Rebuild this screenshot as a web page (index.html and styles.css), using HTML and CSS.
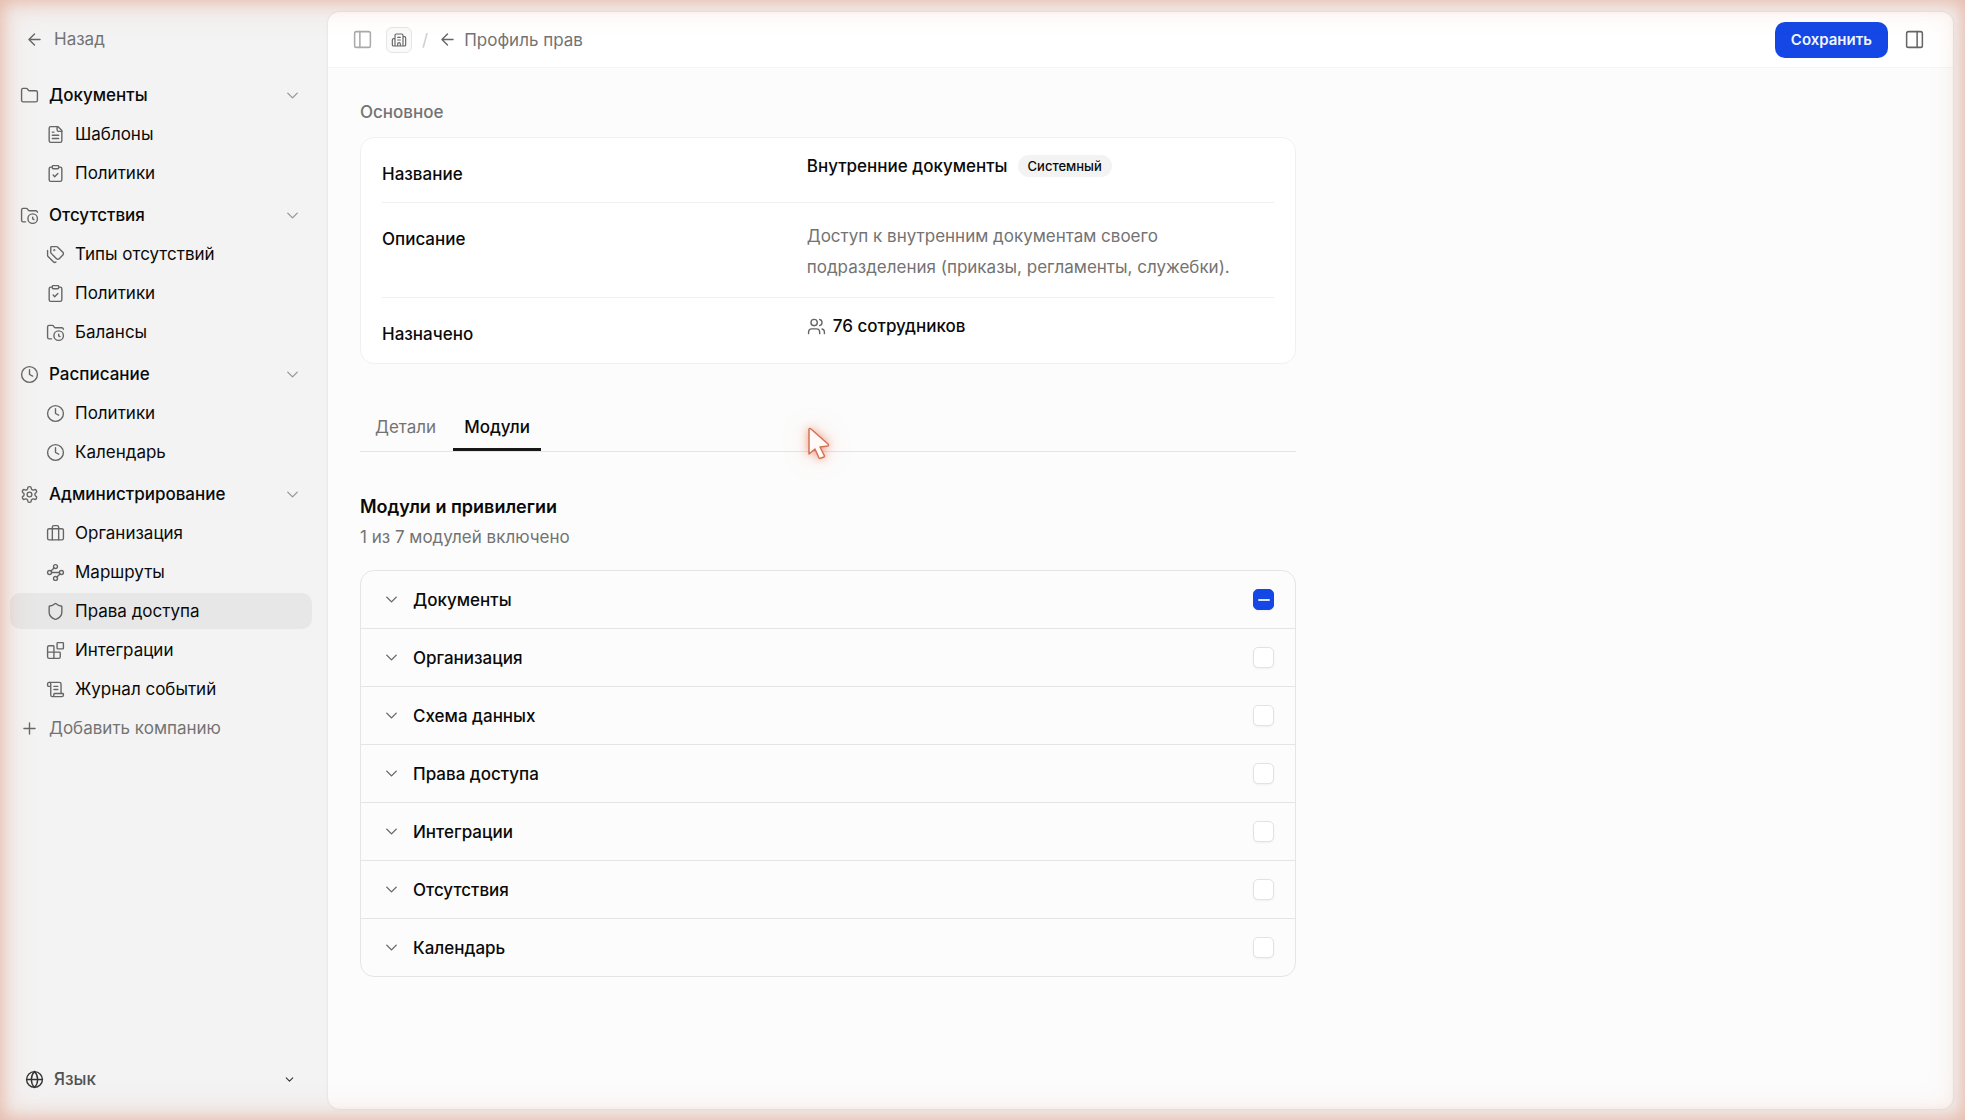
FILE: index.html
```html
<!DOCTYPE html>
<html lang="ru">
<head>
    <meta charset="UTF-8">
    <meta name="viewport" content="width=device-width, initial-scale=1.0">
    <title>Профиль прав</title>
    <link rel="stylesheet" href="styles.css">
</head>
<body>

<svg class="sprite" aria-hidden="true">
    <symbol id="arrow-left" viewBox="0 0 24 24"><path d="m12 19-7-7 7-7M19 12H5"/></symbol>
    <symbol id="chevron" viewBox="0 0 24 24"><path d="m6 9 6 6 6-6"/></symbol>
    <symbol id="plus" viewBox="0 0 24 24"><path d="M5 12h14M12 5v14"/></symbol>
    <symbol id="folder" viewBox="0 0 24 24"><path d="M20 20a2 2 0 0 0 2-2V8a2 2 0 0 0-2-2h-7.9a2 2 0 0 1-1.69-.9L9.6 3.9A2 2 0 0 0 7.93 3H4a2 2 0 0 0-2 2v13a2 2 0 0 0 2 2Z"/></symbol>
    <symbol id="file" viewBox="0 0 24 24"><path d="M15 2H6a2 2 0 0 0-2 2v16a2 2 0 0 0 2 2h12a2 2 0 0 0 2-2V7Z"/><path d="M14 2v4a2 2 0 0 0 2 2h4M10 9H8M16 13H8M16 17H8"/></symbol>
    <symbol id="clipboard" viewBox="0 0 24 24"><rect x="8" y="2" width="8" height="4" rx="1"/><path d="M16 4h2a2 2 0 0 1 2 2v14a2 2 0 0 1-2 2H6a2 2 0 0 1-2-2V6a2 2 0 0 1 2-2h2M9 14l2 2 4-4"/></symbol>
    <symbol id="folder-clock" viewBox="0 0 24 24"><path d="M16 14v2.2l1.6 1M7 20H4a2 2 0 0 1-2-2V5a2 2 0 0 1 2-2h3.9a2 2 0 0 1 1.69.9l.81 1.2a2 2 0 0 0 1.67.9H20a2 2 0 0 1 2 2"/><circle cx="16" cy="16" r="6"/></symbol>
    <symbol id="tags" viewBox="0 0 24 24"><path d="M13.172 2a2 2 0 0 1 1.414.586l6.71 6.71a2.4 2.4 0 0 1 0 3.408l-4.592 4.592a2.4 2.4 0 0 1-3.408 0l-6.71-6.71A2 2 0 0 1 6 9.172V3a1 1 0 0 1 1-1z"/><path d="M2 7v6.172a2 2 0 0 0 .586 1.414l6.71 6.71a2.4 2.4 0 0 0 3.191.193"/><circle cx="10.5" cy="6.5" r=".5"/></symbol>
    <symbol id="clock" viewBox="0 0 24 24"><circle cx="12" cy="12" r="10"/><path d="M12 6v6l4 2"/></symbol>
    <symbol id="settings" viewBox="0 0 24 24"><path d="M12.22 2h-.44a2 2 0 0 0-2 2v.18a2 2 0 0 1-1 1.73l-.43.25a2 2 0 0 1-2 0l-.15-.08a2 2 0 0 0-2.73.73l-.22.38a2 2 0 0 0 .73 2.73l.15.1a2 2 0 0 1 1 1.72v.51a2 2 0 0 1-1 1.74l-.15.09a2 2 0 0 0-.73 2.73l.22.38a2 2 0 0 0 2.73.73l.15-.08a2 2 0 0 1 2 0l.43.25a2 2 0 0 1 1 1.73V20a2 2 0 0 0 2 2h.44a2 2 0 0 0 2-2v-.18a2 2 0 0 1 1-1.73l.43-.25a2 2 0 0 1 2 0l.15.08a2 2 0 0 0 2.73-.73l.22-.39a2 2 0 0 0-.73-2.73l-.15-.08a2 2 0 0 1-1-1.74v-.5a2 2 0 0 1 1-1.74l.15-.09a2 2 0 0 0 .73-2.73l-.22-.38a2 2 0 0 0-2.73-.73l-.15.08a2 2 0 0 1-2 0l-.43-.25a2 2 0 0 1-1-1.73V4a2 2 0 0 0-2-2z"/><circle cx="12" cy="12" r="3"/></symbol>
    <symbol id="briefcase" viewBox="0 0 24 24"><rect x="2" y="6" width="20" height="14" rx="2"/><path d="M16 20V4a2 2 0 0 0-2-2h-4a2 2 0 0 0-2 2v16"/></symbol>
    <symbol id="waypoints" viewBox="0 0 24 24"><circle cx="12" cy="4.5" r="2.5"/><path d="m10.2 6.3-3.9 3.9M7 12h10M13.8 17.7l3.9-3.9"/><circle cx="4.5" cy="12" r="2.5"/><circle cx="19.5" cy="12" r="2.5"/><circle cx="12" cy="19.5" r="2.5"/></symbol>
    <symbol id="shield" viewBox="0 0 24 24"><path d="M20 13c0 5-3.5 7.5-7.66 8.95a1 1 0 0 1-.67-.01C7.5 20.5 4 18 4 13V6a1 1 0 0 1 1-1c2 0 4.5-1.2 6.24-2.72a1.17 1.17 0 0 1 1.52 0C14.51 3.81 17 5 19 5a1 1 0 0 1 1 1z"/></symbol>
    <symbol id="blocks" viewBox="0 0 24 24"><rect x="14" y="2" width="8" height="8" rx="1"/><path d="M10 22V7a1 1 0 0 0-1-1H4a2 2 0 0 0-2 2v12a2 2 0 0 0 2 2h12a2 2 0 0 0 2-2v-5a1 1 0 0 0-1-1H2"/></symbol>
    <symbol id="scroll" viewBox="0 0 24 24"><path d="M15 12h-5M15 8h-5M19 17V5a2 2 0 0 0-2-2H4"/><path d="M8 21h12a2 2 0 0 0 2-2v-1a1 1 0 0 0-1-1H11a1 1 0 0 0-1 1v1a2 2 0 1 1-4 0V5a2 2 0 1 0-4 0v2a1 1 0 0 0 1 1h3"/></symbol>
    <symbol id="globe" viewBox="0 0 24 24"><circle cx="12" cy="12" r="10"/><path d="M12 2a14.5 14.5 0 0 0 0 20 14.5 14.5 0 0 0 0-20M2 12h20"/></symbol>
    <symbol id="panel-left" viewBox="0 0 24 24"><rect x="3" y="3" width="18" height="18" rx="2"/><path d="M9 3v18"/></symbol>
    <symbol id="panel-right" viewBox="0 0 24 24"><rect x="3" y="3" width="18" height="18" rx="2"/><path d="M15 3v18"/></symbol>
    <symbol id="building" viewBox="0 0 24 24"><path d="M10 12h4M10 8h4M14 21v-3a2 2 0 0 0-4 0v3M6 10H4a2 2 0 0 0-2 2v7a2 2 0 0 0 2 2h16a2 2 0 0 0 2-2V9a2 2 0 0 0-2-2h-2M6 21V5a2 2 0 0 1 2-2h8a2 2 0 0 1 2 2v16"/></symbol>
    <symbol id="users" viewBox="0 0 24 24"><path d="M16 21v-2a4 4 0 0 0-4-4H6a4 4 0 0 0-4 4v2"/><circle cx="9" cy="7" r="4"/><path d="M22 21v-2a4 4 0 0 0-3-3.87M16 3.13a4 4 0 0 1 0 7.75"/></symbol>
</svg>

<div class="app">
    <aside class="sidebar">
        <a class="side-link back" href="#"><svg class="icon"><use href="#arrow-left"/></svg>Назад</a>

        <nav class="nav">
            <div class="nav-group">
                <button class="side-link group-title" type="button" aria-expanded="true"><svg class="icon"><use href="#folder"/></svg>Документы<svg class="icon caret"><use href="#chevron"/></svg></button>
                <a class="side-link sub" href="#"><svg class="icon"><use href="#file"/></svg>Шаблоны</a>
                <a class="side-link sub" href="#"><svg class="icon"><use href="#clipboard"/></svg>Политики</a>
            </div>
            <div class="nav-group">
                <button class="side-link group-title" type="button" aria-expanded="true"><svg class="icon"><use href="#folder-clock"/></svg>Отсутствия<svg class="icon caret"><use href="#chevron"/></svg></button>
                <a class="side-link sub" href="#"><svg class="icon"><use href="#tags"/></svg>Типы отсутствий</a>
                <a class="side-link sub" href="#"><svg class="icon"><use href="#clipboard"/></svg>Политики</a>
                <a class="side-link sub" href="#"><svg class="icon"><use href="#folder-clock"/></svg>Балансы</a>
            </div>
            <div class="nav-group">
                <button class="side-link group-title" type="button" aria-expanded="true"><svg class="icon"><use href="#clock"/></svg>Расписание<svg class="icon caret"><use href="#chevron"/></svg></button>
                <a class="side-link sub" href="#"><svg class="icon"><use href="#clock"/></svg>Политики</a>
                <a class="side-link sub" href="#"><svg class="icon"><use href="#clock"/></svg>Календарь</a>
            </div>
            <div class="nav-group">
                <button class="side-link group-title" type="button" aria-expanded="true"><svg class="icon"><use href="#settings"/></svg>Администрирование<svg class="icon caret"><use href="#chevron"/></svg></button>
                <a class="side-link sub" href="#"><svg class="icon"><use href="#briefcase"/></svg>Организация</a>
                <a class="side-link sub" href="#"><svg class="icon"><use href="#waypoints"/></svg>Маршруты</a>
                <a class="side-link sub active" href="#" aria-current="page"><svg class="icon"><use href="#shield"/></svg>Права доступа</a>
                <a class="side-link sub" href="#"><svg class="icon"><use href="#blocks"/></svg>Интеграции</a>
                <a class="side-link sub" href="#"><svg class="icon"><use href="#scroll"/></svg>Журнал событий</a>
                <button class="side-link add" type="button"><svg class="icon"><use href="#plus"/></svg>Добавить компанию</button>
            </div>
        </nav>

        <button class="side-link language" type="button" aria-haspopup="menu"><svg class="icon"><use href="#globe"/></svg>Язык<svg class="icon small-caret"><use href="#chevron"/></svg></button>
    </aside>

    <main class="page">
        <header class="topbar">
            <button class="icon-button faded" type="button" aria-label="Боковая панель"><svg class="icon panel"><use href="#panel-left"/></svg></button>
            <a class="home" href="#" aria-label="Компания"><svg class="icon"><use href="#building"/></svg></a>
            <span class="slash">/</span>
            <a class="crumb" href="#"><svg class="icon"><use href="#arrow-left"/></svg>Профиль прав</a>
            <button class="save" type="button">Сохранить</button>
            <button class="icon-button" type="button" aria-label="Правая панель"><svg class="icon panel"><use href="#panel-right"/></svg></button>
        </header>

        <div class="content">
            <h2 class="section-label">Основное</h2>
            <dl class="info">
                <div class="info-row">
                    <dt>Название</dt>
                    <dd>Внутренние документы<span class="badge">Системный</span></dd>
                </div>
                <div class="info-row">
                    <dt>Описание</dt>
                    <dd class="description">Доступ к внутренним документам своего подразделения (приказы, регламенты, служебки).</dd>
                </div>
                <div class="info-row">
                    <dt>Назначено</dt>
                    <dd><svg class="icon users"><use href="#users"/></svg>76 сотрудников</dd>
                </div>
            </dl>

            <div class="tabs" role="tablist">
                <button class="tab" type="button" role="tab" aria-selected="false">Детали</button>
                <button class="tab selected" type="button" role="tab" aria-selected="true">Модули</button>
            </div>

            <h2 class="modules-title">Модули и привилегии</h2>
            <p class="modules-count">1 из 7 модулей включено</p>

            <ul class="modules">
                <li class="module">
                    <button class="toggle" type="button" aria-label="Развернуть Документы"><svg class="icon"><use href="#chevron"/></svg></button>
                    <label for="m-docs">Документы</label>
                    <input class="check partial" type="checkbox" id="m-docs">
                </li>
                <li class="module">
                    <button class="toggle" type="button" aria-label="Развернуть Организация"><svg class="icon"><use href="#chevron"/></svg></button>
                    <label for="m-org">Организация</label>
                    <input class="check" type="checkbox" id="m-org">
                </li>
                <li class="module">
                    <button class="toggle" type="button" aria-label="Развернуть Схема данных"><svg class="icon"><use href="#chevron"/></svg></button>
                    <label for="m-schema">Схема данных</label>
                    <input class="check" type="checkbox" id="m-schema">
                </li>
                <li class="module">
                    <button class="toggle" type="button" aria-label="Развернуть Права доступа"><svg class="icon"><use href="#chevron"/></svg></button>
                    <label for="m-access">Права доступа</label>
                    <input class="check" type="checkbox" id="m-access">
                </li>
                <li class="module">
                    <button class="toggle" type="button" aria-label="Развернуть Интеграции"><svg class="icon"><use href="#chevron"/></svg></button>
                    <label for="m-integrations">Интеграции</label>
                    <input class="check" type="checkbox" id="m-integrations">
                </li>
                <li class="module">
                    <button class="toggle" type="button" aria-label="Развернуть Отсутствия"><svg class="icon"><use href="#chevron"/></svg></button>
                    <label for="m-absence">Отсутствия</label>
                    <input class="check" type="checkbox" id="m-absence">
                </li>
                <li class="module">
                    <button class="toggle" type="button" aria-label="Развернуть Календарь"><svg class="icon"><use href="#chevron"/></svg></button>
                    <label for="m-calendar">Календарь</label>
                    <input class="check" type="checkbox" id="m-calendar">
                </li>
            </ul>
        </div>
    </main>
</div>

<div class="glow"></div>
<svg class="pointer" viewBox="0 0 24 34" aria-hidden="true"><path d="M2 2v25l6-5 4 9q1 1 2 0l3-1q1-1 0-2l-4-8 8-1q1-1 0-2L4 2q-1-1-2 0Z"/></svg>

<script>
    // "partly on" can only be set from script
    document.querySelectorAll('.partial').forEach((box) => {
        box.indeterminate = true;
    });
</script>

</body>
</html>
```
FILE: styles.css
```css
* {
    box-sizing: border-box;
}
body {
    margin: 0;
    font-family: Inter, "Liberation Sans", sans-serif;
    font-size: 17px;
    line-height: 24px;
    color: #0a0a0a;
    background: #f3f3f3;
}
button {
    margin: 0;
    padding: 0;
    border: none;
    background: none;
    font: inherit;
    color: inherit;
    cursor: pointer;
}
a {
    color: inherit;
    text-decoration: none;
}
h2, p, dl, dd, ul {
    margin: 0;
    padding: 0;
}
.sprite {
    display: none;
}
.icon {
    width: 19px;
    height: 19px;
    flex: none;
    fill: none;
    stroke: #666;
    stroke-width: 1.75;
    stroke-linecap: round;
    stroke-linejoin: round;
}
.app {
    display: flex;
    min-height: 100vh;
}

/* sidebar */
.sidebar {
    width: 328px;
    flex: none;
    display: flex;
    flex-direction: column;
    padding: 21px 16px 23px 10px;
}
.side-link {
    display: flex;
    align-items: center;
    gap: 10px;
    width: 100%;
    height: 36px;
    padding: 0 10px;
    border-radius: 10px;
    text-align: left;
}
.back {
    padding-left: 15px;
    color: #737373;
}
.nav {
    flex: 1;
    display: flex;
    flex-direction: column;
    gap: 6px;
    margin-top: 20px;
}
.nav-group {
    display: flex;
    flex-direction: column;
    gap: 3px;
}
.group-title {
    font-weight: 500;
}
.caret {
    margin-left: auto;
    stroke: #999;
}
.sub {
    padding-left: 36px;
}
.active {
    background: #e7e7e7;
}
.add {
    color: #737373;
}
.language {
    padding: 0 16px 0 15px;
    font-weight: 500;
    color: #525252;
}
.language .icon {
    stroke: #333;
}
.language .small-caret {
    width: 13px;
    height: 13px;
    margin-left: auto;
    stroke-width: 2;
}

/* page */
.page {
    flex: 1;
    min-width: 0;
    margin: 12px 12px 11px 0;
    background: #fcfcfc;
    border-radius: 12px;
    box-shadow: 0 0 3px rgba(0, 0, 0, 0.1);
    overflow: hidden;
}
.topbar {
    display: flex;
    align-items: center;
    height: 56px;
    padding: 0 28px 0 24px;
    background: #fff;
    border-bottom: 1px solid #f5f5f5;
}
.icon-button {
    display: flex;
}
.panel {
    width: 21px;
    height: 21px;
}
.faded .icon {
    stroke: #aaa;
}
.home {
    display: flex;
    align-items: center;
    justify-content: center;
    width: 26px;
    height: 26px;
    margin-left: 13px;
    background: #fafafa;
    border: 1px solid #e5e5e5;
    border-radius: 6px;
}
.home .icon {
    width: 16px;
    height: 16px;
}
.slash {
    margin: 0 10px;
    color: #ccc;
}
.crumb {
    display: flex;
    align-items: center;
    gap: 7px;
    color: #737373;
}
.save {
    height: 36px;
    margin: 0 16px 0 auto;
    padding: 0 16px;
    border-radius: 10px;
    background: #1447e6;
    color: #eff6ff;
    font-size: 15px;
    font-weight: 600;
}
.content {
    max-width: 1000px;
    padding: 32px;
}
.section-label {
    font-size: 17px;
    font-weight: 500;
    color: #737373;
}

/* main facts */
.info {
    margin-top: 13px;
    padding: 0 21px;
    background: #fff;
    border: 1px solid #f0f0f0;
    border-radius: 14px;
}
.info-row {
    display: grid;
    grid-template-columns: 10fr 11fr;
    min-height: 66px;
    padding: 16px 0 14px;
    font-weight: 500;
}
.info-row:first-child {
    min-height: 64px;
}
.info-row + .info-row {
    border-top: 1px solid #f0f0f0;
}
.info dt {
    padding-top: 8px;
}
.info dd {
    display: flex;
    align-items: center;
    align-self: start;
}
.info .description {
    display: block;
    padding-top: 2px;
    font-weight: 400;
    line-height: 31px;
    color: #737373;
}
.badge {
    margin-left: 10px;
    padding: 0 10px;
    border-radius: 11px;
    background: #f3f3f3;
    font-size: 13px;
    line-height: 22px;
}
.users {
    margin-right: 7px;
}

/* tabs */
.tabs {
    display: flex;
    gap: 6px;
    margin-top: 42px;
    padding: 0 4px;
    border-bottom: 1px solid #e5e5e5;
}
.tab {
    height: 45px;
    padding: 0 11px;
    border-bottom: 3px solid transparent;
    color: #737373;
}
.tab.selected {
    border-color: #171717;
    color: #0a0a0a;
    font-weight: 500;
}

/* modules */
.modules-title {
    margin-top: 43px;
    font-size: 18px;
    font-weight: 600;
}
.modules-count {
    margin-top: 6px;
    color: #737373;
}
.modules {
    margin-top: 21px;
    border: 1px solid #e5e5e5;
    border-radius: 14px;
    list-style: none;
}
.module {
    display: flex;
    align-items: center;
    height: 58px;
    padding: 0 21px;
    font-weight: 500;
}
.module:first-child {
    height: 57px;
}
.module + .module {
    border-top: 1px solid #e5e5e5;
}
.toggle {
    display: flex;
    margin-right: 12px;
}
.check {
    appearance: none;
    display: grid;
    place-items: center;
    width: 21px;
    height: 21px;
    margin: 0 0 0 auto;
    border: 1px solid #e2e2e2;
    border-radius: 5px;
    background: #fff;
    box-shadow: 0 1px 2px rgba(0, 0, 0, 0.05);
}
.check:indeterminate {
    border-color: #1447e6;
    background: #1447e6;
}
.check:indeterminate::before {
    content: "";
    width: 12px;
    height: 2px;
    border-radius: 1px;
    background: #dbe5ff;
}

/* glow round the window and the pointer */
.glow {
    position: fixed;
    inset: 0;
    pointer-events: none;
    box-shadow: inset 0 0 16px 3px rgba(217, 119, 87, 0.35), inset 0 0 36px rgba(217, 119, 87, 0.2);
}
.pointer {
    position: absolute;
    left: 807px;
    top: 427px;
    width: 24px;
    height: 34px;
    overflow: visible;
    fill: #fffaf8;
    stroke: #cf7557;
    stroke-width: 1.5;
    stroke-linejoin: round;
    filter: drop-shadow(0 0 4px rgba(235, 100, 60, 0.6)) drop-shadow(0 0 12px rgba(235, 100, 60, 0.2));
    pointer-events: none;
}
```
